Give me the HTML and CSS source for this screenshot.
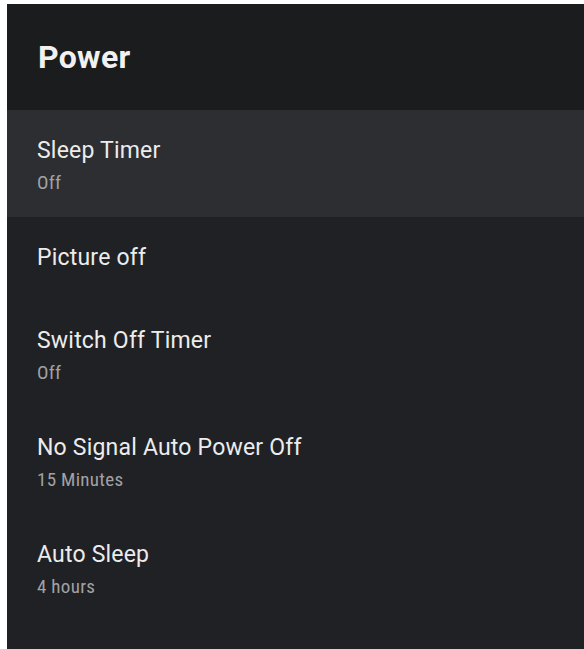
FILE: index.html
```html
<!DOCTYPE html>
<html>
<head>
<meta charset="utf-8">
<link rel="stylesheet" href="styles.css">
</head>
<body>
<div class="panel">
  <header class="header"><h1 class="title">Power</h1></header>
  <ul class="list">
    <li class="item focused"><div class="label">Sleep Timer</div><div class="value">Off</div></li>
    <li class="item single"><div class="label">Picture off</div></li>
    <li class="item"><div class="label">Switch Off Timer</div><div class="value">Off</div></li>
    <li class="item"><div class="label">No Signal Auto Power Off</div><div class="value">15 Minutes</div></li>
    <li class="item"><div class="label">Auto Sleep</div><div class="value">4 hours</div></li>
  </ul>
</div>
</body>
</html>
```
FILE: styles.css
```css
html, body {
  margin: 0;
  padding: 0;
  background: #ffffff;
  height: 100%;
}
body {
  padding: 4px 0 0 7px;
  box-sizing: border-box;
  font-family: Roboto, "Liberation Sans", sans-serif;
  overflow: hidden;
}
.panel {
  background: #202125;
  height: 100%;
}
.header {
  background: #1b1c1e;
  height: 106px;
  box-sizing: border-box;
  padding: 35px 0 0 31px;
}
.title {
  margin: 0;
  font-size: 32px;
  line-height: 36px;
  font-weight: 700;
  letter-spacing: 0.3px;
  color: #f1f1f1;
}
.list {
  list-style: none;
  margin: 0;
  padding: 0;
}
.item {
  padding: 28px 0 23px 30px;
}
.item.single {
  padding-bottom: 29px;
}
.item.focused {
  background: #2d2e32;
}
.label {
  font-size: 23px;
  line-height: 26px;
  letter-spacing: 0.2px;
  color: #ececec;
}
.value {
  margin-top: 8px;
  font-family: "Roboto Condensed", Roboto, "Liberation Sans", sans-serif;
  font-stretch: condensed;
  font-size: 19px;
  line-height: 22px;
  letter-spacing: 0.3px;
  color: #a2a2a4;
}
```
